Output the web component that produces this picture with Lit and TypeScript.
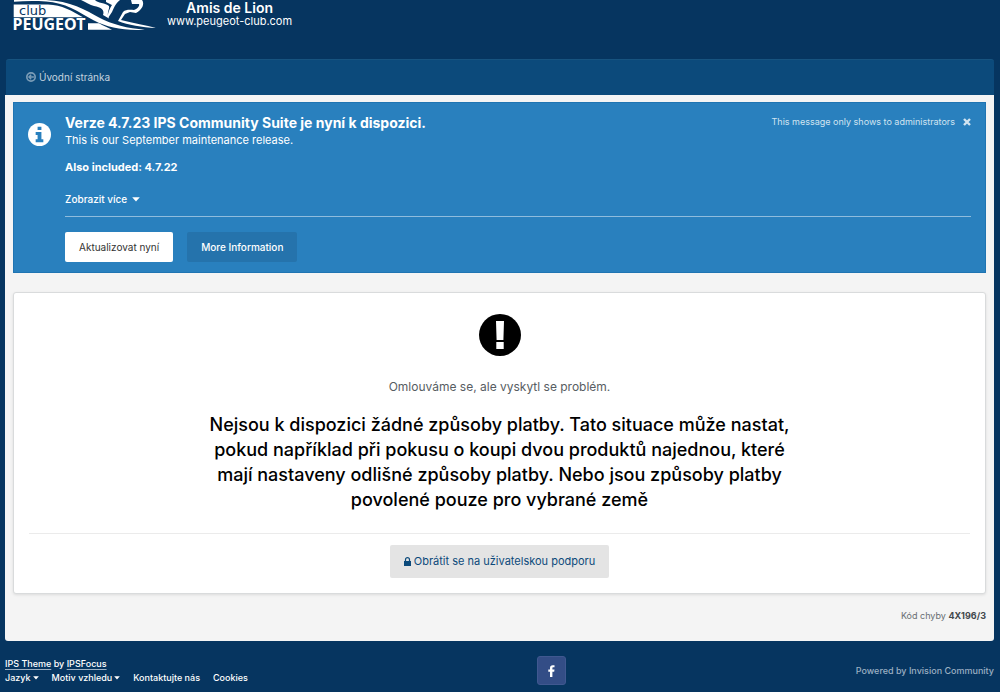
import { LitElement, html, css, svg } from "lit";
import { customElement } from "lit/decorators.js";

const caret = html`<svg class="caret" viewBox="0 0 8 5" aria-hidden="true"><path d="M0.2 0.3h7.600L4 4.600z" fill="currentColor" /></svg>`;

@customElement("club-logo")
export class ClubLogo extends LitElement {
  static styles = css`
    :host { display: block; }
    svg { display: block; }
    .club { font: 13px "DejaVu Sans", sans-serif; fill: #063560; }
    .name { font: bold 16px "Noto Sans", sans-serif; fill: #fff; }
  `;

  render() {
    return html`<svg width="146" height="36" viewBox="12 0 146 36" role="img" aria-label="Club Peugeot">
      ${svg`
        <g fill="#fff">
          <path d="M13.700 4.500H48C62 5 72 11 83 17.300H13.700z" />
          <path d="M14 0H46C70 1 86 10 99 17.500C112 24.500 128 28.500 145 29.700C124 31 108 27.500 94 20.500C78 11.500 65 2.500 46 1.500C34 0.800 24 1 14 1.800z" />
          <path d="M88 23.300H99C104 26 108 28 112 29.700H88z" />
          <path d="M81 0H95C97 3 106 3 109 6C110 9 106 13 109 18.500L103 15C105 10 101 7 94 6C90 5 86 2 81 0z" />
          <path d="M106 0H120C115 4 114 8 112 12L108 18C107 14 110 8 112 5L106 2z" />
          <path d="M131 0H142C145 4 142 10 136 13L130 12L125 14L121 20C134 23 146 25.500 156 28C142 27.500 128 25 118 21L123 12C126 9 131 10 134 10C137 9 140 6 139 4L132 4z" />
        </g>
        <text class="club" x="19" y="15">club</text>
        <text class="name" x="12.500" y="30">PEUGEOT</text>`}
    </svg>`;
  }
}

@customElement("app-root")
export class AppRoot extends LitElement {
  static styles = css`
    :host {
      display: block;
      min-height: 100vh;
      background: #063560;
      font-family: Inter, sans-serif;
      font-size: 13px;
      line-height: 20px;
      font-optical-sizing: none;
      color: #353c41;
    }
    * { box-sizing: border-box; }
    a { color: inherit; text-decoration: none; }
    h1, h2, p { margin: 0; }
    button { font: inherit; border: 0; cursor: pointer; }
    .page { padding: 0 6px; }
    header { display: flex; height: 59px; align-items: flex-start; padding: 0 6px; gap: 9px; }
    .tagline { color: #fff; text-align: center; }
    .tagline strong { display: block; font-size: 14px; line-height: 15px; font-weight: 600; }
    .tagline span { display: block; font-size: 11px; line-height: 13px; }
    nav { background: #0c4a7b; border-top: 1px solid #17537f; border-radius: 3px 3px 0 0; height: 36px; display: flex; align-items: center; padding: 0 20px 2px; }
    .crumb { display: flex; align-items: center; gap: 3px; font-size: 10px; color: #c4d3df; }
    .crumb svg { width: 10px; height: 10px; opacity: 0.6; }
    main { background: #f4f4f4; margin-left: -1px; border-radius: 0 0 3px 3px; padding: 7px 8px 15px; }
    .notice { background: #2980be; border: 1px solid #1f74b2; color: #fff; display: flex; padding: 10px 14px; }
    .info { flex: none; width: 23px; height: 23px; margin: 10px 14px 0 0; }
    .body { flex: 1; min-width: 0; }
    .top { display: flex; justify-content: space-between; }
    h2 { font-size: 14px; line-height: 20px; font-weight: 700; }
    .dismiss { display: flex; gap: 8px; align-items: center; height: 18px; font-size: 9px; color: #d1e4f1; }
    .dismiss button { padding: 0; width: 8px; height: 8px; background: none; color: inherit; display: flex; }
    .dismiss svg { width: 8px; height: 8px; }
    .small { font-size: 11px; line-height: 14px; }
    .also { margin-top: 13px; font-weight: 700; }
    .more { display: flex; align-items: center; gap: 5px; padding: 0; margin-top: 18px; background: none; color: #fff; font-size: 10px; line-height: 14px; font-weight: 500; }
    .caret { width: 8px; height: 5px; }
    .actions { display: flex; gap: 14px; border-top: 1px solid #8fbcdd; margin-top: 10px; padding-top: 15px; }
    .actions a { font-size: 10px; line-height: 30px; padding: 0 14px; border-radius: 2px; }
    .primary { background: #fff; color: #333; }
    .secondary { background: #2573ac; font-weight: 500; }
    .panel { margin-top: 19px; background: #fff; border: 1px solid #d9dbdc; border-radius: 3px; box-shadow: 0 1px 3px #0000001a; padding: 21px 15px 15px; text-align: center; display: flex; flex-direction: column; align-items: center; }
    .alert { width: 42px; height: 42px; }
    .sorry { margin-top: 21px; font-size: 12px; line-height: 20px; color: #575d62; }
    h1 { margin-top: 15px; max-width: 600px; font-size: 18px; line-height: 25px; font-weight: 500; color: #000; }
    .support { align-self: stretch; margin-top: 21px; padding-top: 11px; border-top: 1px solid #ebebeb; display: flex; justify-content: center; }
    .support a { display: flex; align-items: center; gap: 3px; background: #e4e4e4; color: #0c4a7b; border-radius: 2px; padding: 0 14px; font-size: 11px; line-height: 33px; }
    .support svg { width: 7px; height: 9px; }
    .code { margin-top: 12px; text-align: right; font-size: 9px; line-height: 20px; color: #686e72; }
    .code strong { color: #42484c; }
    footer { display: flex; justify-content: space-between; align-items: center; padding: 15px 0 6px; margin-left: -1px; font-size: 9px; line-height: 14px; color: #fff; font-weight: 500; }
    .by a { text-decoration: underline #9fb2c4 1px; text-underline-offset: 2px; }
    .links { display: flex; gap: 13px; }
    .links button { padding: 0; background: none; color: inherit; display: flex; align-items: center; gap: 2px; }
    .links .caret { width: 6px; height: 4px; }
    .fb { width: 29px; height: 29px; background: #334d86; border: 1px solid #405890; border-radius: 3px; display: grid; place-items: center; }
    .fb svg { width: 7px; height: 12px; }
    .powered { color: #9bafc2; }
  `;

  render() {
    return html`<div class="page">
      <header>
        <club-logo></club-logo>
        <div class="tagline"><strong>Amis de Lion</strong><span>www.peugeot-club.com</span></div>
      </header>
      <nav aria-label="Breadcrumb">
        <a class="crumb" href="#"><svg viewBox="0 0 12 12" aria-hidden="true"><circle cx="6" cy="6" r="5" fill="none" stroke="currentColor" stroke-width="2" /><path d="M9.500 6H3.800M6.200 3.300L3.500 6L6.200 8.700" fill="none" stroke="currentColor" stroke-width="1.700" /></svg>Úvodní stránka</a>
      </nav>
      <main>
        <section class="notice">
          <svg class="info" viewBox="0 0 24 24" aria-hidden="true"><circle cx="12" cy="12" r="12" fill="#fff" /><path d="M10 4h4v3.300h-4zM8 9.500h6v7.500h2V20H8v-3h2v-4.500H8z" fill="#2980be" /></svg>
          <div class="body">
            <div class="top">
              <h2>Verze 4.7.23 IPS Community Suite je nyní k dispozici.</h2>
              <div class="dismiss"><span>This message only shows to administrators</span><button aria-label="Close"><svg viewBox="0 0 8 8"><path d="M1 1L7 7M7 1L1 7" stroke="currentColor" stroke-width="2.400" /></svg></button></div>
            </div>
            <p class="small">This is our September maintenance release.</p>
            <p class="small also">Also included: 4.7.22</p>
            <button class="more">Zobrazit více ${caret}</button>
            <div class="actions"><a class="primary" href="#">Aktualizovat nyní</a><a class="secondary" href="#">More Information</a></div>
          </div>
        </section>
        <section class="panel">
          <svg class="alert" viewBox="0 0 42 42" aria-hidden="true"><circle cx="21" cy="21" r="21" fill="#000" /><path d="M17 7h8l-0.600 19h-6.800zM17.300 28h7.400v7h-7.400z" fill="#fff" /></svg>
          <p class="sorry">Omlouváme se, ale vyskytl se problém.</p>
          <h1>Nejsou k dispozici žádné způsoby platby. Tato situace může nastat, pokud například při pokusu o koupi dvou produktů najednou, které mají nastaveny odlišné způsoby platby. Nebo jsou způsoby platby povolené pouze pro vybrané země</h1>
          <div class="support"><a href="#"><svg viewBox="0 0 7 9" aria-hidden="true"><path d="M0 4h7v5H0z" fill="currentColor" /><path d="M1.500 4.500V2.700a2 2 0 0 1 4 0V4.500" fill="none" stroke="currentColor" stroke-width="1.200" /></svg>Obrátit se na uživatelskou podporu</a></div>
        </section>
        <p class="code">Kód chyby <strong>4X196/3</strong></p>
      </main>
      <footer>
        <div>
          <div class="by"><a href="#">IPS Theme</a> by <a href="#">IPSFocus</a></div>
          <div class="links"><button>Jazyk ${caret}</button><button>Motiv vzhledu ${caret}</button><a href="#">Kontaktujte nás</a><a href="#">Cookies</a></div>
        </div>
        <a class="fb" href="#" aria-label="Facebook"><svg viewBox="0 0 7 12" aria-hidden="true"><path d="M2 12V6.700H0.300V4.500H2V3C2 1.200 3 0.200 4.700 0.200H6.500V2.200H5.400C4.600 2.200 4.400 2.600 4.400 3.200V4.500H6.500L6.200 6.700H4.400V12z" fill="#fff" /></svg></a>
        <a class="powered" href="#">Powered by Invision Community</a>
      </footer>
    </div>`;
  }
}
